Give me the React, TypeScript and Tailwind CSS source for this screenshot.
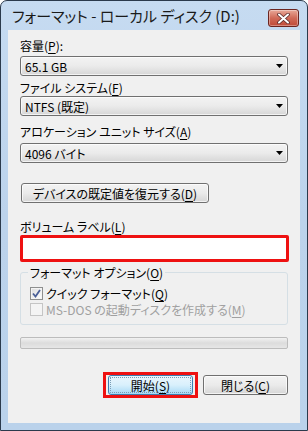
import React from 'react';

const FONT = { fontFamily: '"Noto Sans CJK JP", "Noto Sans", sans-serif', fontFeatureSettings: '"palt"' } as React.CSSProperties;

const Arrow = () => (
  <svg width="7" height="4" viewBox="0 0 7 4" className="shrink-0">
    <path d="M0 0h7L3.5 4z" fill="#000" />
  </svg>
);

const Combo: React.FC<{ value: string }> = ({ value }) => (
  <div className="h-[20px] flex items-center justify-between pl-[4px] pr-[4px] rounded-[3px] border border-[#707070] bg-gradient-to-b from-[#f3f3f3] via-[#ebebeb] to-[#d6d6d6] shadow-[inset_0_0_0_1px_rgba(255,255,255,0.7)] text-[12px] leading-[15px]">
    <span>{value}</span>
    <Arrow />
  </div>
);

const Label: React.FC<{ children: React.ReactNode; className?: string }> = ({ children, className }) => (
  <div className={`h-[15px] text-[12px] leading-[15px] ${className ?? ''}`}>{children}</div>
);

const Key: React.FC<{ k: string }> = ({ k }) => (
  <>(<u className="underline-offset-[2px]">{k}</u>)</>
);

const Check: React.FC<{ checked?: boolean; disabled?: boolean }> = ({ checked, disabled }) => (
  <div
    className={`w-[13px] h-[13px] border flex items-center justify-center shrink-0 ${
      disabled
        ? 'border-[#c5c5c5] bg-[#f4f4f4]'
        : 'border-[#8e8f8f] bg-gradient-to-br from-[#dcdcdc] to-[#ffffff] shadow-[inset_0_0_0_1px_#f4f4f4]'
    }`}
  >
    {checked && (
      <svg width="9" height="9" viewBox="0 0 9 9">
        <path d="M1 4.5l2.5 3L8 1" fill="none" stroke="#4a5f97" strokeWidth="1.8" />
      </svg>
    )}
  </div>
);

export default function App() {
  return (
    <div className="w-[308px] h-[431px] bg-white" style={FONT}>
      <div className="w-[308px] h-[431px] flex flex-col rounded-t-[7px] border border-[#2b3a4c] bg-gradient-to-b from-[#c6dbf1] via-[#bcd3ec] to-[#bad2eb] text-black">
        {/* Title bar */}
        <div className="h-[29px] shrink-0 flex items-start justify-between pl-[11px] pr-[8px]">
          <span className="mt-[5px] text-[15px] leading-[20px] text-[#1a1a1a]">フォーマット - ローカル ディスク (D:)</span>
          <div className="mt-[8px] w-[31px] h-[18px] rounded-[3px] border border-[#6b2520] bg-gradient-to-b from-[#e8a898] via-[#d06a58] to-[#c04a38] shadow-[inset_0_0_0_1px_rgba(255,255,255,0.35)] flex items-center justify-center">
            <svg width="13" height="11" viewBox="0 0 13 11">
              <path d="M2 1.5l9 8M11 1.5l-9 8" stroke="#5a2a2a" strokeWidth="3.6" strokeLinecap="round" />
              <path d="M2 1.5l9 8M11 1.5l-9 8" stroke="#fff" strokeWidth="2" strokeLinecap="round" />
            </svg>
          </div>
        </div>

        {/* Client */}
        <div className="mx-[7px] h-[393px] bg-[#f0f0f0] px-[12px] pt-[8px] flex flex-col">
          <Label>容量<Key k="P" />:</Label>
          <div className="mt-[3px]"><Combo value="65.1 GB" /></div>

          <Label className="mt-[4px]">ファイル システム<Key k="F" /></Label>
          <div className="mt-[1px]"><Combo value="NTFS (既定)" /></div>

          <Label className="mt-[8px]">アロケーション ユニット サイズ<Key k="A" /></Label>
          <div className="mt-[4px]"><Combo value="4096 バイト" /></div>

          <button className="mt-[20px] ml-[1px] w-[188px] h-[20px] rounded-[3px] border border-[#707070] bg-gradient-to-b from-[#f3f3f3] via-[#ebebeb] to-[#d6d6d6] shadow-[inset_0_0_0_1px_rgba(255,255,255,0.7)] text-[12px] leading-[15px] flex items-center justify-center">
            デバイスの既定値を復元する<Key k="D" />
          </button>

          <Label className="mt-[16px]">ボリューム ラベル<Key k="L" /></Label>
          <div className="mt-[1px] w-[269px] h-[27px] border-[3px] border-[#ee1111] rounded-[2px] bg-white" />

          <fieldset className="mt-[3px] border border-[#d5dfe5] rounded-[3px] px-[9px] pb-[7px]">
            <legend className="ml-[-2px] px-[2px] text-[12px] leading-[15px]">フォーマット オプション<Key k="O" /></legend>
            <div className="pt-[6px] h-[21px] flex items-center gap-[3px] text-[12px] leading-[15px]">
              <Check checked />
              <span>クイック フォーマット<Key k="Q" /></span>
            </div>
            <div className="mt-[1px] h-[15px] flex items-center gap-[3px] text-[12px] leading-[15px] text-[#a0a0a0]">
              <Check disabled />
              <span>MS-DOS の起動ディスクを作成する<Key k="M" /></span>
            </div>
          </fieldset>

          <div className="mt-[12px] h-[12px] rounded-[2px] border border-[#bcbcbc] bg-gradient-to-b from-[#f2f2f2] via-[#dcdcdc] to-[#e6e6e6]" />

          <div className="mt-[23px] flex justify-end items-center gap-[5px]">
            <div className="h-[26px] border-[3px] border-[#ee1111] px-[2px] flex items-center">
              <button className="w-[85px] h-[20px] rounded-[3px] border border-[#3c7fb1] bg-gradient-to-b from-[#eaf6fd] via-[#d9f0fc] to-[#a7d9f5] text-[12px] leading-[15px] outline-1 outline-dotted outline-[#7a9cb4] outline-offset-[-3px] flex items-center justify-center">
                開始<Key k="S" />
              </button>
            </div>
            <button className="w-[85px] h-[20px] rounded-[3px] border border-[#707070] bg-gradient-to-b from-[#f3f3f3] via-[#ebebeb] to-[#d6d6d6] shadow-[inset_0_0_0_1px_rgba(255,255,255,0.7)] text-[12px] leading-[15px] flex items-center justify-center">
              閉じる<Key k="C" />
            </button>
          </div>
        </div>
      </div>
    </div>
  );
}
